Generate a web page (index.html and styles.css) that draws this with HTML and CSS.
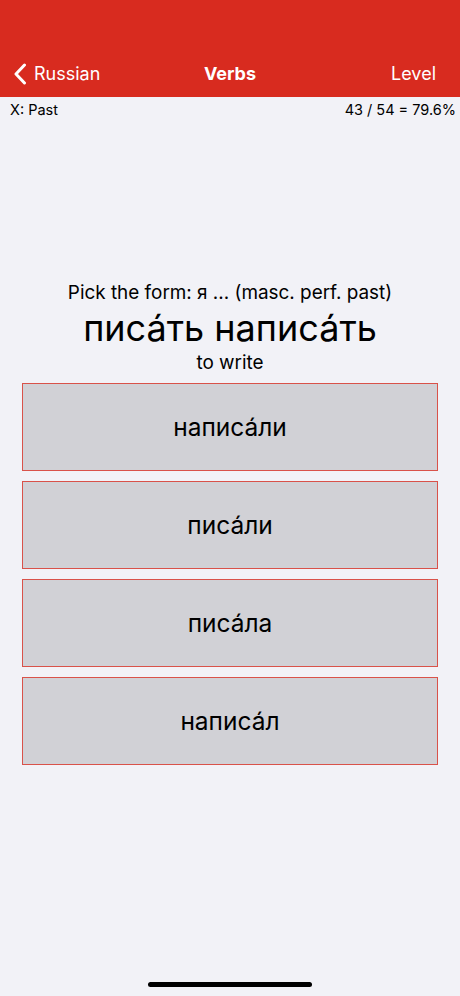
FILE: index.html
```html
<!DOCTYPE html>
<html lang="en">
<head>
<meta charset="utf-8">
<title>Verbs</title>
<link rel="stylesheet" href="styles.css">
</head>
<body>
<div class="screen">
  <header class="navbar">
    <div class="nav-row">
      <div class="nav-left">
        <svg class="chevron" width="14" height="22" viewBox="0 0 14 22"><path d="M11.5 2 L3 11 L11.5 20" fill="none" stroke="#fff" stroke-width="3" stroke-linecap="round" stroke-linejoin="round"/></svg>
        <span>Russian</span>
      </div>
      <div class="nav-title">Verbs</div>
      <div class="nav-right">Level</div>
    </div>
  </header>
  <div class="info-row">
    <span>X: Past</span>
    <span>43 / 54 = 79.6%</span>
  </div>
  <main class="content">
    <div class="prompt">Pick the form: я ... (masc. perf. past)</div>
    <div class="word">писа́ть написа́ть</div>
    <div class="meaning">to write</div>
    <div class="options">
      <div class="option">написа́ли</div>
      <div class="option">писа́ли</div>
      <div class="option">писа́ла</div>
      <div class="option">написа́л</div>
    </div>
  </main>
  <div class="home-bar"></div>
</div>
</body>
</html>
```
FILE: styles.css
```css
* { box-sizing: border-box; }
html, body { margin: 0; padding: 0; }
body {
  background: #f2f2f7;
  font-family: Inter, "Liberation Sans", Arial, sans-serif;
  color: #000;
}
.screen {
  width: 460px;
  height: 996px;
  display: flex;
  flex-direction: column;
  position: relative;
}
.navbar {
  background: #d82b1f;
  height: 97px;
  padding-top: 50px;
  color: #fff;
}
.nav-row {
  height: 47px;
  display: flex;
  align-items: center;
  justify-content: space-between;
  padding: 0 24px 0 13px;
  position: relative;
}
.nav-left {
  display: flex;
  align-items: center;
  gap: 7px;
  font-size: 18px;
}
.chevron { display: block; }
.nav-title {
  position: absolute;
  left: 0; right: 0;
  text-align: center;
  font-size: 18px;
  font-weight: 700;
  pointer-events: none;
}
.nav-right { font-size: 18px; }
.info-row {
  display: flex;
  justify-content: space-between;
  padding: 4px 4px 0 10px;
  font-size: 14.5px;
  line-height: 18px;
}
.content {
  display: flex;
  flex-direction: column;
  align-items: center;
  padding-top: 163px;
}
.prompt {
  font-size: 18.9px;
  line-height: 22px;
}
.word {
  font-size: 36px;
  line-height: 48px;
}
.meaning {
  font-size: 18.9px;
  line-height: 22px;
}
.options {
  align-self: flex-start;
  margin-left: 22px;
  width: 416px;
  margin-top: 9px;
  display: flex;
  flex-direction: column;
  gap: 10px;
}
.option {
  height: 88px;
  background: #d1d1d6;
  border: 1px solid #d9524a;
  display: flex;
  align-items: center;
  justify-content: center;
  font-size: 24.5px;
}
.home-bar {
  position: absolute;
  left: 148px;
  bottom: 9px;
  width: 164px;
  height: 5px;
  border-radius: 3px;
  background: #000;
}
```
